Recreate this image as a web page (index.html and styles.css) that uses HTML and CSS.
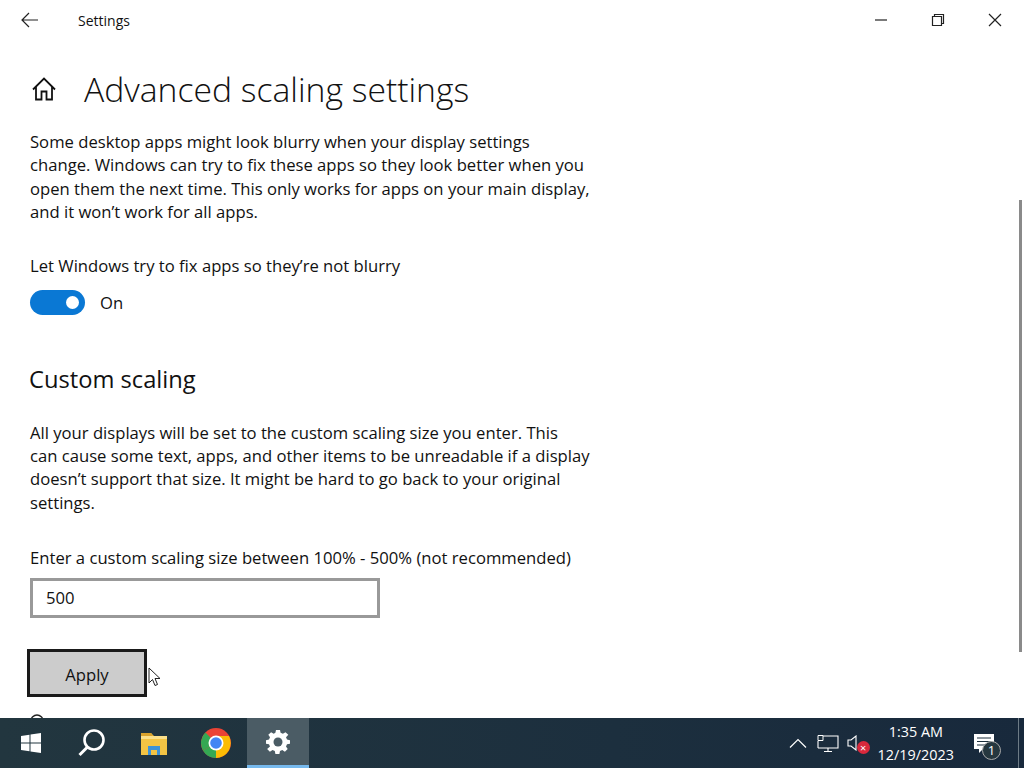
FILE: index.html
```html
<!DOCTYPE html>
<html lang="en">
<head>
    <meta charset="UTF-8">
    <title>Settings</title>
    <link rel="stylesheet" href="styles.css">
</head>
<body>
    <div class="window">
        <!-- Title bar -->
        <div class="titlebar">
            <svg class="back-icon" width="18" height="16" viewBox="0 0 18 16"><path d="M8 1 1 8l7 7M1 8h16" fill="none" stroke="#222" stroke-width="1.2"/></svg>
            <span class="app-title">Settings</span>
            <div class="window-btns">
                <svg width="14" height="14" viewBox="0 0 14 14"><path d="M1 7h12" stroke="#222" stroke-width="1.2"/></svg>
                <svg width="14" height="14" viewBox="0 0 14 14"><path d="M1.5 3.5h9v9h-9zM3.500 3.500v-2h9v9h-2" fill="none" stroke="#222" stroke-width="1.2"/></svg>
                <svg width="14" height="14" viewBox="0 0 14 14"><path d="M1 1l12 12M13 1 1 13" stroke="#222" stroke-width="1.2"/></svg>
            </div>
        </div>

        <div class="content">
            <div class="page-head">
                <svg class="home-icon" width="24" height="24" viewBox="0 0 24 24"><path d="M1 12.500 12 1.500l11 11M4 9.500V22.500h5.500v-8h5v8H20V9.500" fill="none" stroke="#111" stroke-width="1.800"/></svg>
                <h1>Advanced scaling settings</h1>
            </div>

            <p class="text">Some desktop apps might look blurry when your display settings change. Windows can try to fix these apps so they look better when you open them the next time. This only works for apps on your main display, and it won’t work for all apps.</p>

            <div class="field-label toggle-label">Let Windows try to fix apps so they’re not blurry</div>
            <div class="toggle-row">
                <span class="toggle"><span class="knob"></span></span>
                <span>On</span>
            </div>

            <h2>Custom scaling</h2>

            <p class="text text-custom">All your displays will be set to the custom scaling size you enter. This<br>can cause some text, apps, and other items to be unreadable if a display doesn’t support that size. It might be hard to go back to your original settings.</p>

            <div class="field-label input-label">Enter a custom scaling size between 100% - 500% (not recommended)</div>
            <div class="input-box">500</div>

            <button class="apply-btn">Apply</button>
            <svg class="next-item" width="14" height="14" viewBox="0 0 14 14"><circle cx="7" cy="7" r="6" fill="none" stroke="#222" stroke-width="1.4"/></svg>
        </div>

        <div class="scrollbar"></div>
        <svg class="cursor" width="13" height="20" viewBox="0 0 13 20"><path d="M1 1v15l3.500-3.500 2.500 6 2.500-1-2.500-6H12z" fill="#fff" stroke="#222" stroke-width="1"/></svg>
    </div>

    <!-- Taskbar -->
    <div class="taskbar">
        <div class="task-item start">
            <svg width="22" height="22" viewBox="0 0 22 22"><path d="M1 4l8.500-1.200V10.500H1zM10.500 2.600 21 1v9.500H10.500zM1 11.500h8.500v7.700L1 18zM10.500 11.500H21V21l-10.500-1.600z" fill="#fff"/></svg>
        </div>
        <div class="task-item">
            <svg width="30" height="30" viewBox="0 0 30 30"><circle cx="17" cy="12" r="9.500" fill="none" stroke="#fff" stroke-width="2.600"/><path d="M10.500 19 2.500 27" stroke="#fff" stroke-width="3"/></svg>
        </div>
        <div class="task-item">
            <svg width="28" height="26" viewBox="0 0 28 26"><path d="M1 3h10l3 3h13v19H1z" fill="#f3c444"/><path d="M1 6h26v3H1z" fill="#fbe08a"/><path d="M8 25v-9h12v9h-3v-5h-6v5z" fill="#3d93d8"/><path d="M1 3h10l2 3H1z" fill="#d9a22c"/></svg>
        </div>
        <div class="task-item">
            <svg width="32" height="32" viewBox="0 0 32 32">
                <circle cx="16" cy="16" r="15" fill="#ea4335"/>
                <path d="M16 16 3 23.500A15 15 0 0 1 5.400 5.400z" fill="#34a853"/>
                <path d="M16 16 3 23.500A15 15 0 0 0 16 31z" fill="#34a853"/>
                <path d="M16 9h13a15 15 0 0 1-13 22z" fill="#fbbc05"/>
                <circle cx="16" cy="16" r="7.500" fill="#fff"/>
                <circle cx="16" cy="16" r="5.800" fill="#4285f4"/>
            </svg>
        </div>
        <div class="task-item active">
            <svg width="24" height="24" viewBox="0 0 24 24"><path d="M10 1h4l.6 3 2.300 1 2.600-1.700 2.800 2.800L20 8.700l1 2.300 3 .6v3.800l-3 .6-1 2.300 1.700 2.600-2.800 2.800-2.600-1.700-2.300 1-.6 3h-4l-.6-3-2.300-1-2.600 1.700-2.800-2.800L4 18.300 3 16l-3-.6v-3.800l3-.6 1-2.300-1.700-2.600 2.800-2.800 2.600 1.700L9.400 4z" transform="translate(0 -1) scale(1 .96)" fill="#fff"/><circle cx="12" cy="12" r="4.500" fill="#4b5c65"/></svg>
        </div>

        <div class="tray">
            <svg class="chevron" width="18" height="10" viewBox="0 0 18 10"><path d="M1 9.500 9 1.500l8 8" fill="none" stroke="#fff" stroke-width="1.200"/></svg>
            <svg width="22" height="18" viewBox="0 0 22 18"><path d="M4 2h17v12H1M1 14V7M11 14v3M7 17.500h8" fill="none" stroke="#fff" stroke-width="1.100"/><path d="M1 1.500h5v5H1z" fill="#1c2f3c" stroke="#fff"/></svg>
            <span class="speaker">
                <svg width="12" height="16" viewBox="0 0 12 16"><path d="M1 5h3l5-4v14l-5-4H1z" fill="none" stroke="#fff" stroke-width="1.100"/></svg>
                <span class="mute-badge">×</span>
            </span>
            <div class="clock">
                <div>1:35 AM</div>
                <div>12/19/2023</div>
            </div>
            <span class="notify">
                <svg width="20" height="19" viewBox="0 0 20 19"><path d="M0 0h20v15H9l-4 4v-4H0z" fill="#fff"/><path d="M3 4h14M3 7.500h14M3 11h9" stroke="#1c2f3c" stroke-width="1.200"/></svg>
                <span class="notify-count">1</span>
            </span>
        </div>
        <div class="show-desktop"></div>
    </div>
</body>
</html>
```

FILE: styles.css
```css
html, body {
    margin: 0;
    height: 100%;
}

body {
    width: 1024px;
    height: 768px;
    overflow: hidden;
    display: flex;
    flex-direction: column;
    font-family: "Open Sans", sans-serif;
    color: #111;
    background: #fff;
}

.window {
    position: relative;
    height: 718px;
    overflow: hidden;
}

/* Title bar */
.titlebar {
    height: 40px;
    display: flex;
    align-items: center;
    padding-left: 21px;
}

.back-icon {
    margin-right: 39px;
}

.app-title {
    font-size: 14px;
}

.window-btns {
    margin-left: auto;
    display: flex;
    gap: 43px;
    padding-right: 22px;
}

/* Page content */
.content {
    padding-left: 30px;
    width: 562px;
}

.page-head {
    display: flex;
    align-items: center;
    gap: 28px;
    height: 40px;
    margin-top: 29px;
}

.home-icon {
    margin-left: 2px;
}

h1 {
    margin: 0;
    font-size: 33.700px;
    font-weight: 300;
}

h2 {
    margin: 48px 0 0 -1px;
    font-size: 23.700px;
    font-weight: 400;
    line-height: 32px;
}

.text {
    margin: 21px 0 0;
    font-size: 16.650px;
    line-height: 23.400px;
}

.text-custom {
    margin-top: 26px;
}

.field-label {
    font-size: 16.650px;
    line-height: 24px;
}

.toggle-label {
    margin-top: 30px;
}

.input-label {
    margin-top: 32px;
}

.toggle-row {
    display: flex;
    align-items: center;
    gap: 15px;
    margin-top: 12px;
    font-size: 16.650px;
}

.toggle {
    width: 55px;
    height: 25px;
    border-radius: 13px;
    background: #0a78d4;
    display: flex;
    align-items: center;
    justify-content: flex-end;
    padding-right: 6px;
    box-sizing: border-box;
}

.knob {
    width: 13px;
    height: 13px;
    border-radius: 50%;
    background: #fff;
}

.input-box {
    width: 350px;
    height: 40px;
    margin-top: 8px;
    padding-left: 13px;
    box-sizing: border-box;
    border: 3px solid #999;
    font-size: 16.650px;
    line-height: 33px;
}

.apply-btn {
    display: block;
    width: 120px;
    height: 48px;
    margin: 31px 0 0 -3px;
    padding-top: 3px;
    background: #ccc;
    border: 3px solid #1a1a1a;
    font-family: inherit;
    font-size: 16.650px;
    color: #111;
}

.next-item {
    display: block;
    margin-top: 17px;
}

.scrollbar {
    position: absolute;
    right: 2px;
    top: 200px;
    width: 3px;
    height: 452px;
    background: #8a8a8a;
}

.cursor {
    position: absolute;
    left: 148px;
    top: 667px;
}

/* Taskbar */
.taskbar {
    height: 50px;
    display: flex;
    background: linear-gradient(90deg, #22363f, #1c2f3e 60%, #18293c);
    color: #fff;
}

.task-item {
    width: 62px;
    display: flex;
    align-items: center;
    justify-content: center;
    box-sizing: border-box;
}

.task-item.start {
    width: 61px;
}

.task-item.active {
    background: #4b5c65;
    border-bottom: 3px solid #76b9ed;
}

.tray {
    margin-left: auto;
    display: flex;
    align-items: center;
    padding-right: 24px;
}

.chevron {
    margin-right: 10px;
}

.speaker {
    position: relative;
    display: flex;
    margin: 0 19px 0 8px;
}

.mute-badge {
    position: absolute;
    left: 10px;
    top: 6px;
    width: 13px;
    height: 13px;
    border-radius: 50%;
    background: #d9283c;
    font-size: 11px;
    line-height: 13px;
    text-align: center;
}

.clock {
    font-size: 14.400px;
    line-height: 23px;
    text-align: center;
    margin-right: 20px;
}

.notify {
    position: relative;
    display: flex;
}

.notify-count {
    position: absolute;
    left: 8px;
    top: 7px;
    width: 19px;
    height: 19px;
    box-sizing: border-box;
    border: 1px solid #aaa;
    border-radius: 50%;
    background: #26373f;
    font-size: 13px;
    line-height: 17px;
    text-align: center;
}

.show-desktop {
    width: 6px;
    box-sizing: border-box;
    border-left: 1px solid #6d7b86;
}
```
